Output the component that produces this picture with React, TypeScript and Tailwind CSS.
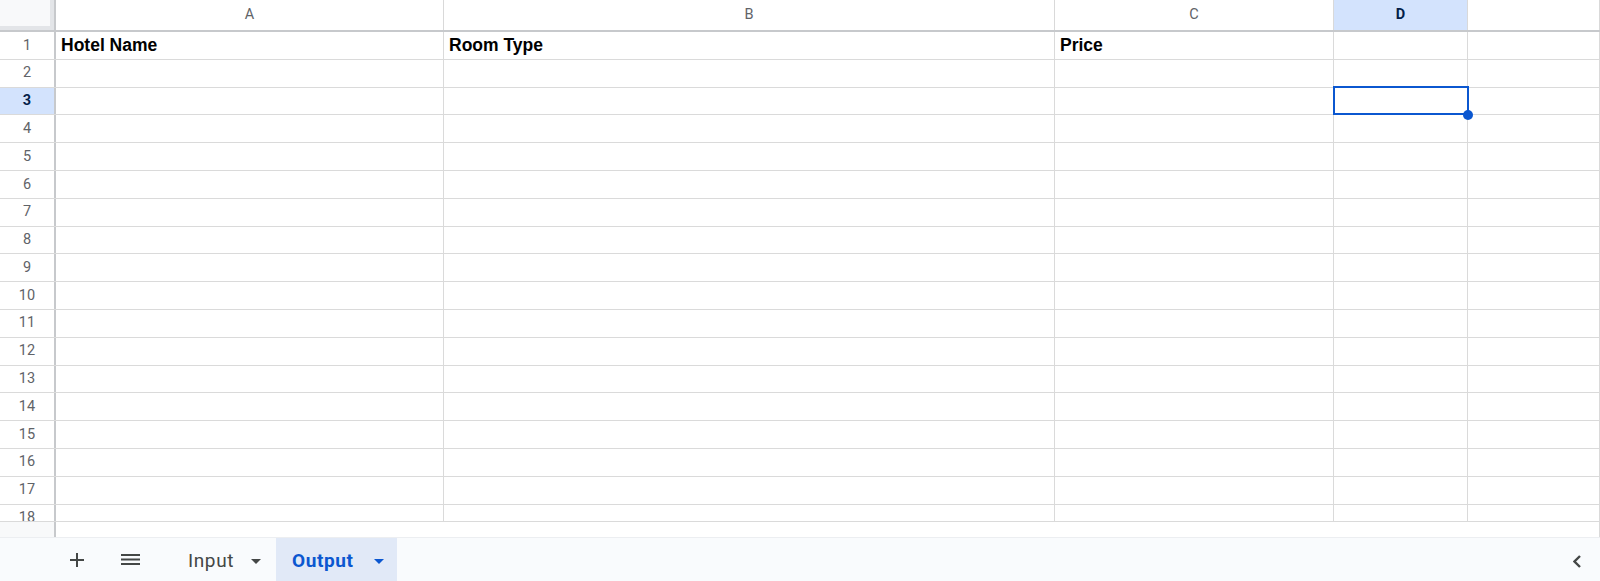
import React from "react";

const ROWS = Array.from({ length: 18 }, (_, i) => i + 1);

const headerCells: Record<number, string[]> = {
  1: ["Hotel Name", "Room Type", "Price", "", ""],
};

const columns = [
  { letter: "A", width: "w-[388px]" },
  { letter: "B", width: "w-[611px]" },
  { letter: "C", width: "w-[279px]" },
  { letter: "D", width: "w-[134px]" },
  { letter: "", width: "w-[132px]" },
];

function Caret({ color }: { color: string }) {
  return (
    <svg width="10" height="5" viewBox="0 0 10 5">
      <path d="M0 0 L10 0 L5 5 Z" fill={color} />
    </svg>
  );
}

export default function App() {
  return (
    <div className="flex h-[581px] w-[1600px] flex-col overflow-hidden bg-white font-['Roboto',sans-serif]">
      {/* Grid */}
      <div className="relative h-[521px] overflow-hidden">
        {/* Column headers */}
        <div className="flex h-[32px] border-b-2 border-[#c7c9cc]">
          <div className="w-[56px] border-r-2 border-[#c7c9cc]">
            <div className="h-full w-full border-b-[4px] border-r-[4px] border-[#e3e5e8] bg-[#f8f9fa]" />
          </div>
          {columns.map((c) => (
            <div
              key={c.letter || "E"}
              className={`${c.width} flex items-center justify-center border-r border-[#d9d9d9] text-[14.5px] ${
                c.letter === "D"
                  ? "bg-[#d3e3fd] font-bold text-[#041e49]"
                  : "text-[#5f6368]"
              }`}
            >
              {c.letter}
            </div>
          ))}
        </div>

        {/* Rows */}
        {ROWS.map((r) => (
          <div key={r} className="flex h-[27.8px] border-b border-[#dadada]">
            <div
              className={`flex w-[56px] items-center justify-center border-r-2 border-[#c7c9cc] text-[14.5px] ${
                r === 3
                  ? "bg-[#d3e3fd] font-bold text-[#041e49]"
                  : "text-[#5f6368]"
              }`}
            >
              {r}
            </div>
            {columns.map((c, i) => (
              <div
                key={c.letter || "E"}
                className={`${c.width} flex items-center border-r border-[#dadada] pl-[5px] font-['Liberation_Sans',Arial,sans-serif] text-[17.5px] font-bold text-black`}
              >
                {headerCells[r]?.[i] ?? ""}
              </div>
            ))}
          </div>
        ))}

        {/* Active cell D3 */}
        <div className="absolute left-[1333px] top-[86px] h-[29px] w-[136px] border-2 border-[#0b57d0]" />
        <div className="absolute left-[1463px] top-[110px] h-[10px] w-[10px] rounded-full bg-[#0b57d0]" />
      </div>

      {/* Horizontal scrollbar strip */}
      <div className="flex h-[16px] border-t border-[#dadada]">
        <div className="w-[56px] border-r-2 border-[#c7c9cc] bg-[#f8f9fa]" />
        <div className="flex-1 border-r border-[#dadada]" />
      </div>

      {/* Sheet tabs */}
      <div className="flex h-[44px] items-stretch border-t border-[#eceef1] bg-[#f9fbfd] pl-[57px]">
        <button type="button" className="flex w-[40px] items-center justify-center">
          <svg width="14" height="14" viewBox="0 0 14 14">
            <path d="M7 0 V14 M0 7 H14" stroke="#444746" strokeWidth="2" />
          </svg>
        </button>
        <button type="button" className="ml-[13px] flex w-[40px] items-center justify-center">
          <svg width="19" height="11" viewBox="0 0 19 11">
            <path d="M0 1 H19 M0 5.5 H19 M0 10 H19" stroke="#444746" strokeWidth="2" />
          </svg>
        </button>
        <div className="ml-[22px] flex w-[104px] items-center pl-[16px] pt-[4px] text-[19px] font-normal tracking-[0.6px] text-[#444746]">
          <span className="w-[47px]">Input</span>
          <span className="ml-[16px] flex items-center">
            <Caret color="#444746" />
          </span>
        </div>
        <div className="flex w-[121px] items-center bg-[#e1e9f7] pl-[16px] pt-[4px] text-[19px] font-bold tracking-[0.6px] text-[#0b57d0]">
          <span className="w-[66px]">Output</span>
          <span className="ml-[16px] flex items-center">
            <Caret color="#0b57d0" />
          </span>
        </div>
        <div className="ml-auto mr-[19px] flex items-center pt-[4px]">
          <svg width="8" height="13" viewBox="0 0 8 13">
            <path d="M7 1 L1.5 6.5 L7 12" stroke="#444746" strokeWidth="2.4" fill="none" />
          </svg>
        </div>
      </div>
    </div>
  );
}
